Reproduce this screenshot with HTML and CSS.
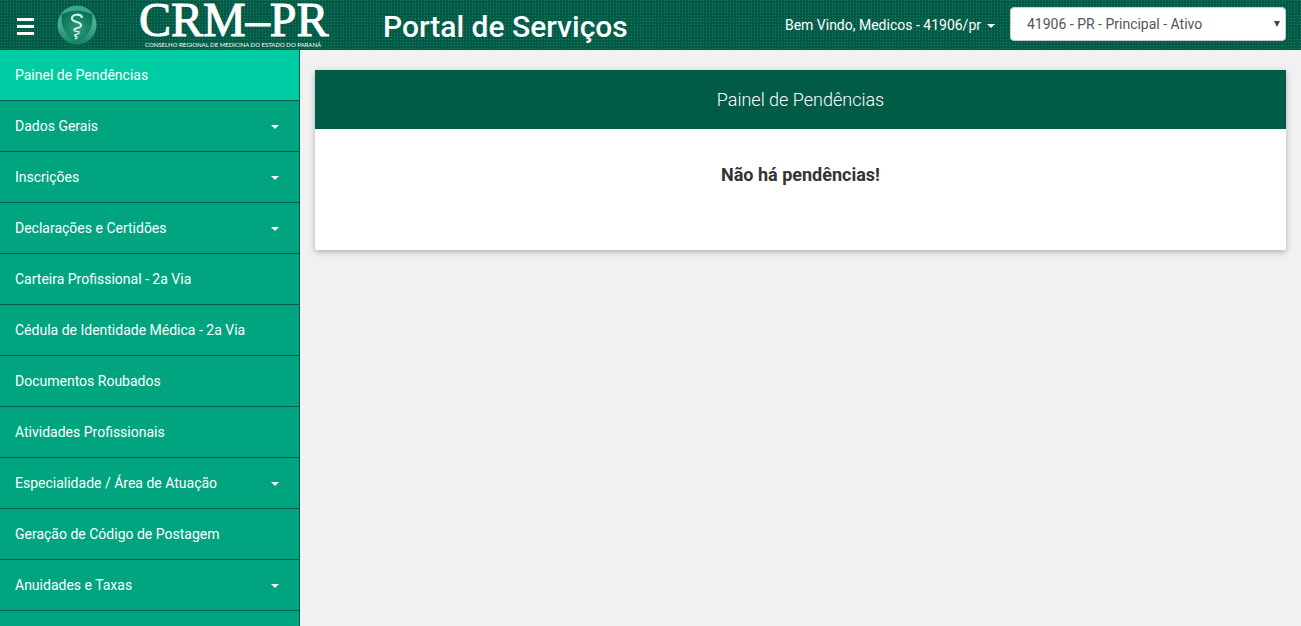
FILE: index.html
```html
<!DOCTYPE html>
<html lang="pt-BR">
<head>
<meta charset="utf-8">
<title>Portal de Serviços - CRM-PR</title>
<meta name="viewport" content="width=device-width, initial-scale=1">
<link rel="stylesheet" href="styles.css">
</head>
<body>
<header class="topbar">
  <button class="menu-toggle" type="button" aria-label="Menu"><span class="bar"></span><span class="bar"></span><span class="bar"></span></button>
  <a class="brand" href="#">
    <svg class="emblem" viewBox="0 0 40 40" aria-hidden="true">
      <defs>
        <linearGradient id="ring" x1="0" y1="0" x2="0" y2="1"><stop offset="0" stop-color="#36a487"/><stop offset=".5" stop-color="#4fac91"/><stop offset="1" stop-color="#0b8566"/></linearGradient>
        <radialGradient id="shield" cx=".5" cy=".6" r=".6"><stop offset="0" stop-color="#2a9c79"/><stop offset="1" stop-color="#087457"/></radialGradient>
      </defs>
      <circle cx="20" cy="20" r="19.5" fill="url(#ring)"/>
      <path d="M5 9Q20 2 35 9Q38 27 20 38Q2 27 5 9Z" fill="url(#shield)"/>
      <path d="M25 13C24 8 14 9 15 14C16 18 25 16 24 21C23 24 18 22 17 25" fill="none" stroke="#d5eee5" stroke-width="2.2"/>
      <path d="M17 25C18 28 23 25 22 28C21 30 17 29 18 31C21 32 20 33 18 34" fill="none" stroke="#d5eee5" stroke-width="1.5"/>
    </svg>
    <svg class="wordmark" viewBox="0 0 188 48" aria-hidden="true">
      <text class="logo-name" x="0" y="35">CRM–PR</text>
      <text class="tagline" x="6" y="46">CONSELHO REGIONAL DE MEDICINA DO ESTADO DO PARANÁ</text>
    </svg>
  </a>
  <h1 class="portal-title">Portal de Serviços</h1>
  <button class="user-menu" type="button">Bem Vindo, Medicos - 41906/pr<span class="caret"></span></button>
  <div class="registration">
    <select class="registration-select" aria-label="Inscrição"><option>41906 - PR - Principal - Ativo</option></select>
    <svg class="select-arrow" viewBox="0 0 6 6" aria-hidden="true"><path d="M0 0H6L3 6Z" fill="#444"/></svg>
  </div>
</header>
<div class="layout">
  <nav class="sidebar" aria-label="Principal">
    <a class="item active" href="#">Painel de Pendências</a>
    <a class="item" href="#">Dados Gerais<span class="caret"></span></a>
    <a class="item" href="#">Inscrições<span class="caret"></span></a>
    <a class="item" href="#">Declarações e Certidões<span class="caret"></span></a>
    <a class="item" href="#">Carteira Profissional - 2a Via</a>
    <a class="item" href="#">Cédula de Identidade Médica - 2a Via</a>
    <a class="item" href="#">Documentos Roubados</a>
    <a class="item" href="#">Atividades Profissionais</a>
    <a class="item" href="#">Especialidade / Área de Atuação<span class="caret"></span></a>
    <a class="item" href="#">Geração de Código de Postagem</a>
    <a class="item" href="#">Anuidades e Taxas<span class="caret"></span></a>
  </nav>
  <main class="content">
    <section class="panel">
      <h2 class="panel-title">Painel de Pendências</h2>
      <div class="panel-body"><p class="message">Não há pendências!</p></div>
    </section>
  </main>
</div>
</body>
</html>
```
FILE: styles.css
```css
* { box-sizing: border-box; }
body {
  margin: 0;
  min-height: 100vh;
  display: flex;
  flex-direction: column;
  background: #f1f1f1;
  color: #333;
  font: 14px/20px Roboto, sans-serif;
}
button { font: inherit; color: inherit; background: none; border: 0; padding: 0; cursor: pointer; }
a { color: inherit; text-decoration: none; }
.topbar {
  display: flex;
  align-items: center;
  height: 50px;
  padding: 0 15px 0 17px;
  color: #fff;
  background: conic-gradient(from 270deg at 1px 1px, #2b7864 90deg, #005c47 0) 1px 0 / 3px 3px;
}
.menu-toggle { display: flex; flex-direction: column; gap: 4px; width: 17px; margin-top: 3px; }
.bar { height: 3px; background: #fff; }
.brand { display: flex; align-items: center; gap: 42px; margin-left: 23px; }
.emblem { width: 40px; height: 40px; }
.wordmark { width: 188px; height: 48px; overflow: visible; }
.logo-name { font: 48px "Liberation Serif", serif; fill: #fff; stroke: #fff; stroke-width: 1px; }
.tagline { font: 6px Lato, sans-serif; fill: #fff; }
.portal-title { margin: 2px 0 0 56px; font-size: 30px; line-height: 33px; font-weight: 500; white-space: nowrap; }
.user-menu { display: flex; align-items: center; gap: 6px; margin-left: auto; white-space: nowrap; }
.caret { border: 4px solid transparent; border-top-color: currentColor; border-bottom: 0; margin-top: 2px; }
.registration { display: flex; position: relative; width: 276px; margin-left: 15px; margin-bottom: 2px; }
.registration-select {
  appearance: none;
  width: 100%;
  height: 34px;
  padding: 0 16px;
  border: 1px solid #ccc;
  border-radius: 4px;
  background: #fff;
  color: #555;
  font: inherit;
}
.select-arrow { position: absolute; right: 6px; top: 14px; width: 6px; height: 6px; pointer-events: none; }
.layout { flex: 1; display: flex; }
.sidebar { flex: none; width: 300px; background: #00a580; border-right: 1px solid #005c47; color: #fff; }
.item {
  display: flex;
  align-items: center;
  justify-content: space-between;
  padding: 15px 20px 15px 15px;
  border-bottom: 1px solid #005c47;
}
.item.active { background: #00cca3; }
.content { flex: 1; padding: 20px 15px; }
.panel { background: #fff; border-radius: 2px; box-shadow: 0 2px 5px rgba(0,0,0,.16), 0 2px 10px rgba(0,0,0,.12); }
.panel-title { margin: 0; padding: 20px; background: #005c47; color: #fff; text-align: center; font-size: 18px; line-height: 19px; font-weight: 300; }
.panel-body { padding: 36px 15px 65px; }
.message { margin: 0; text-align: center; font-size: 18px; line-height: 20px; font-weight: 700; }
```
